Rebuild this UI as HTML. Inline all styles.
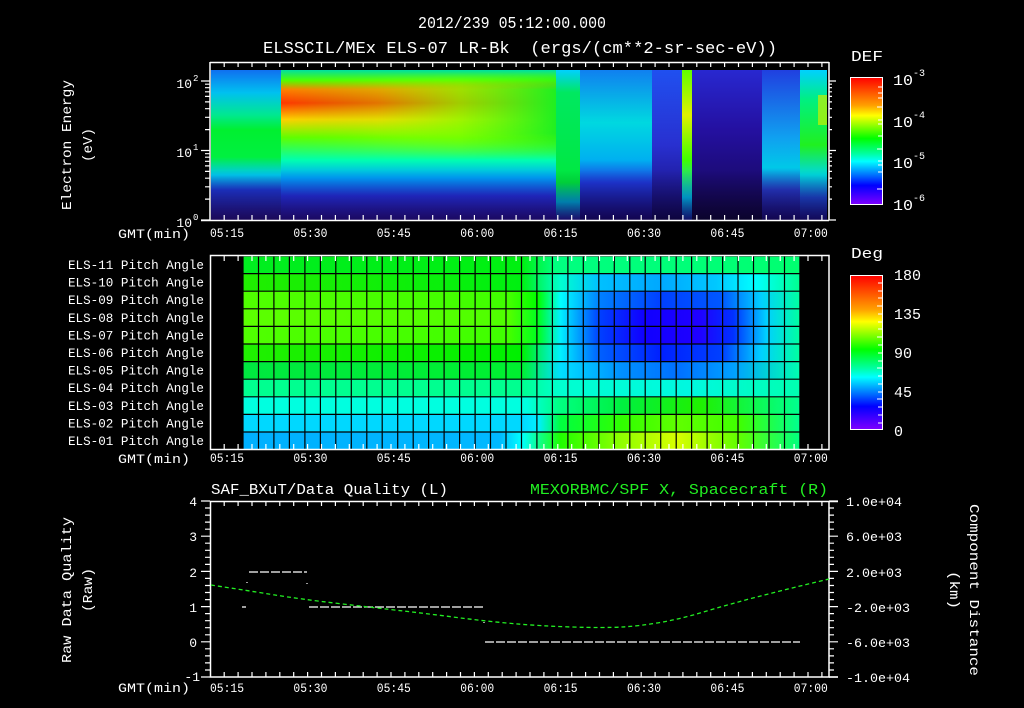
<!DOCTYPE html>
<html><head><meta charset="utf-8"><style>
html,body{margin:0;padding:0;background:#000;}
svg{display:block;}
text{font-family:"Liberation Mono","DejaVu Sans Mono",monospace;fill:#fff;}
</style></head><body>
<svg width="1024" height="708" viewBox="0 0 1024 708" xmlns="http://www.w3.org/2000/svg">
<defs>
<linearGradient id="gA" x1="0" y1="0" x2="0" y2="1">
 <stop offset="0" stop-color="#1070f0"/><stop offset="0.15" stop-color="#00c0f0"/><stop offset="0.3" stop-color="#00e890"/><stop offset="0.4" stop-color="#00f030"/>
 <stop offset="0.58" stop-color="#00f040"/><stop offset="0.7" stop-color="#00c8f0"/><stop offset="0.8" stop-color="#2038e0"/><stop offset="1" stop-color="#3010a0"/>
</linearGradient>
<linearGradient id="gB" x1="0" y1="0" x2="0" y2="1">
 <stop offset="0" stop-color="#00e0a0"/><stop offset="0.07" stop-color="#50ff00"/><stop offset="0.13" stop-color="#ff8000"/>
 <stop offset="0.22" stop-color="#ff3800"/><stop offset="0.33" stop-color="#ffd000"/><stop offset="0.45" stop-color="#60ff00"/>
 <stop offset="0.6" stop-color="#00ffb0"/><stop offset="0.72" stop-color="#00a0ff"/><stop offset="0.84" stop-color="#2830f0"/><stop offset="1" stop-color="#3010b0"/>
</linearGradient>
<linearGradient id="gBh" x1="0" y1="0" x2="1" y2="0">
 <stop offset="0" stop-color="#60ff00" stop-opacity="0"/><stop offset="0.35" stop-color="#a0ff00" stop-opacity="0.3"/><stop offset="0.65" stop-color="#80ff00" stop-opacity="0.75"/><stop offset="1" stop-color="#20f020" stop-opacity="1"/>
</linearGradient>
<linearGradient id="mv" x1="0" y1="0" x2="0" y2="1">
 <stop offset="0" stop-color="#fff" stop-opacity="0"/><stop offset="0.2" stop-color="#fff" stop-opacity="1"/><stop offset="0.7" stop-color="#fff" stop-opacity="1"/><stop offset="1" stop-color="#fff" stop-opacity="0"/>
</linearGradient>
<mask id="bandMask" maskUnits="userSpaceOnUse" x="281" y="70" width="275" height="100">
 <rect x="281" y="72" width="275" height="88" fill="url(#mv)"/>
</mask>
<linearGradient id="gC" x1="0" y1="0" x2="0" y2="1">
 <stop offset="0" stop-color="#00d0ff"/><stop offset="0.15" stop-color="#00e860"/><stop offset="0.75" stop-color="#00e840"/><stop offset="0.88" stop-color="#00b0f0"/><stop offset="1" stop-color="#3018c0"/>
</linearGradient>
<linearGradient id="gD" x1="0" y1="0" x2="0" y2="1">
 <stop offset="0" stop-color="#1080f0"/><stop offset="0.35" stop-color="#00d8e0"/><stop offset="0.6" stop-color="#00b0f0"/><stop offset="0.75" stop-color="#2038e0"/><stop offset="1" stop-color="#200890"/>
</linearGradient>
<linearGradient id="gE" x1="0" y1="0" x2="0" y2="1">
 <stop offset="0" stop-color="#2050f0"/><stop offset="0.5" stop-color="#2830d0"/><stop offset="1" stop-color="#180870"/>
</linearGradient>
<linearGradient id="gF" x1="0" y1="0" x2="0" y2="1">
 <stop offset="0" stop-color="#60ff00"/><stop offset="0.3" stop-color="#e0f000"/><stop offset="0.6" stop-color="#40ff00"/><stop offset="0.85" stop-color="#00c0ff"/><stop offset="1" stop-color="#2020c0"/>
</linearGradient>
<linearGradient id="gG" x1="0" y1="0" x2="0" y2="1">
 <stop offset="0" stop-color="#2828d0"/><stop offset="0.4" stop-color="#2410a0"/><stop offset="1" stop-color="#140650"/>
</linearGradient>
<linearGradient id="gH" x1="0" y1="0" x2="0" y2="1">
 <stop offset="0" stop-color="#2040e0"/><stop offset="0.45" stop-color="#10a0f0"/><stop offset="0.65" stop-color="#00c8e8"/><stop offset="0.8" stop-color="#2838d0"/><stop offset="1" stop-color="#200a90"/>
</linearGradient>
<linearGradient id="gI" x1="0" y1="0" x2="0" y2="1">
 <stop offset="0" stop-color="#00d0ff"/><stop offset="0.2" stop-color="#00f080"/><stop offset="0.5" stop-color="#20f020"/><stop offset="0.7" stop-color="#00d8e0"/><stop offset="0.85" stop-color="#2048e0"/><stop offset="1" stop-color="#2010a0"/>
</linearGradient>
<linearGradient id="dark" x1="0" y1="0" x2="0" y2="1">
 <stop offset="0" stop-color="#000" stop-opacity="0"/><stop offset="1" stop-color="#000" stop-opacity="0.45"/>
</linearGradient>
<linearGradient id="gDef" x1="0" y1="0" x2="0" y2="1">
 <stop offset="0" stop-color="#ff0000"/><stop offset="0.22" stop-color="#ffa000"/><stop offset="0.3" stop-color="#ffff00"/><stop offset="0.48" stop-color="#00ff00"/>
 <stop offset="0.6" stop-color="#00ffa0"/><stop offset="0.66" stop-color="#00ffff"/><stop offset="0.78" stop-color="#0060ff"/><stop offset="0.85" stop-color="#0000ff"/><stop offset="1" stop-color="#7f00ff"/>
</linearGradient>
<linearGradient id="r1" x1="243" x2="800" gradientUnits="userSpaceOnUse"><stop offset="0" stop-color="#00ee20"/><stop offset="0.5" stop-color="#00f010"/><stop offset="0.56" stop-color="#00ff80"/><stop offset="1" stop-color="#00ff70"/></linearGradient>
<linearGradient id="r2" x1="243" x2="800" gradientUnits="userSpaceOnUse"><stop offset="0" stop-color="#20ee00"/><stop offset="0.5" stop-color="#00f010"/><stop offset="0.57" stop-color="#00ffd0"/><stop offset="0.64" stop-color="#00c0ff"/><stop offset="0.75" stop-color="#00a8ff"/><stop offset="0.85" stop-color="#00c8ff"/><stop offset="0.92" stop-color="#00ffff"/><stop offset="1" stop-color="#00ff90"/></linearGradient>
<linearGradient id="r3" x1="243" x2="800" gradientUnits="userSpaceOnUse"><stop offset="0" stop-color="#50ff00"/><stop offset="0.48" stop-color="#40ff00"/><stop offset="0.53" stop-color="#00ff00"/><stop offset="0.57" stop-color="#00ffff"/><stop offset="0.64" stop-color="#0080ff"/><stop offset="0.75" stop-color="#0040ff"/><stop offset="0.86" stop-color="#0058ff"/><stop offset="0.93" stop-color="#00d0ff"/><stop offset="1" stop-color="#00ffa0"/></linearGradient>
<linearGradient id="r4" x1="243" x2="800" gradientUnits="userSpaceOnUse"><stop offset="0" stop-color="#5cff00"/><stop offset="0.48" stop-color="#50ff00"/><stop offset="0.53" stop-color="#00ff20"/><stop offset="0.57" stop-color="#00f0ff"/><stop offset="0.64" stop-color="#0040ff"/><stop offset="0.72" stop-color="#1000ff"/><stop offset="0.82" stop-color="#2000ff"/><stop offset="0.88" stop-color="#0030ff"/><stop offset="0.94" stop-color="#00d0ff"/><stop offset="1" stop-color="#00ffa0"/></linearGradient>
<linearGradient id="r5" x1="243" x2="800" gradientUnits="userSpaceOnUse"><stop offset="0" stop-color="#50ff00"/><stop offset="0.48" stop-color="#40ff00"/><stop offset="0.53" stop-color="#00ff20"/><stop offset="0.57" stop-color="#00f0ff"/><stop offset="0.64" stop-color="#0040ff"/><stop offset="0.72" stop-color="#1000ff"/><stop offset="0.82" stop-color="#2000ff"/><stop offset="0.88" stop-color="#0030ff"/><stop offset="0.94" stop-color="#00d0ff"/><stop offset="1" stop-color="#00ffa0"/></linearGradient>
<linearGradient id="r6" x1="243" x2="800" gradientUnits="userSpaceOnUse"><stop offset="0" stop-color="#20f000"/><stop offset="0.5" stop-color="#00f000"/><stop offset="0.57" stop-color="#00f0ff"/><stop offset="0.64" stop-color="#0060ff"/><stop offset="0.75" stop-color="#0020ff"/><stop offset="0.86" stop-color="#0040ff"/><stop offset="0.93" stop-color="#00d0ff"/><stop offset="1" stop-color="#00ffa0"/></linearGradient>
<linearGradient id="r7" x1="243" x2="800" gradientUnits="userSpaceOnUse"><stop offset="0" stop-color="#00e840"/><stop offset="0.5" stop-color="#00f030"/><stop offset="0.57" stop-color="#00e0ff"/><stop offset="0.68" stop-color="#0090ff"/><stop offset="0.78" stop-color="#0070ff"/><stop offset="0.88" stop-color="#00a0ff"/><stop offset="1" stop-color="#00ffb0"/></linearGradient>
<linearGradient id="r8" x1="243" x2="800" gradientUnits="userSpaceOnUse"><stop offset="0" stop-color="#00ff90"/><stop offset="0.5" stop-color="#00ff90"/><stop offset="0.57" stop-color="#00ffd0"/><stop offset="0.8" stop-color="#00f8e0"/><stop offset="1" stop-color="#00ffb0"/></linearGradient>
<linearGradient id="r9" x1="243" x2="800" gradientUnits="userSpaceOnUse"><stop offset="0" stop-color="#00ffe0"/><stop offset="0.51" stop-color="#00ffe0"/><stop offset="0.57" stop-color="#00ff80"/><stop offset="0.68" stop-color="#00f040"/><stop offset="0.82" stop-color="#20f000"/><stop offset="1" stop-color="#00ff90"/></linearGradient>
<linearGradient id="r10" x1="243" x2="800" gradientUnits="userSpaceOnUse"><stop offset="0" stop-color="#00d8ff"/><stop offset="0.5" stop-color="#00d8ff"/><stop offset="0.53" stop-color="#00f0ff"/><stop offset="0.57" stop-color="#00ff40"/><stop offset="0.68" stop-color="#30ff00"/><stop offset="0.78" stop-color="#60ff00"/><stop offset="0.89" stop-color="#40ff00"/><stop offset="1" stop-color="#00ff90"/></linearGradient>
<linearGradient id="r11" x1="243" x2="800" gradientUnits="userSpaceOnUse"><stop offset="0" stop-color="#00b0ff"/><stop offset="0.46" stop-color="#00b8ff"/><stop offset="0.5" stop-color="#00ffff"/><stop offset="0.57" stop-color="#20ff00"/><stop offset="0.68" stop-color="#90ff00"/><stop offset="0.78" stop-color="#d8ff00"/><stop offset="0.89" stop-color="#60ff00"/><stop offset="1" stop-color="#00ff80"/></linearGradient>
</defs>

<text x="512" y="28" text-anchor="middle" font-size="17" textLength="188" lengthAdjust="spacingAndGlyphs">2012/239 05:12:00.000</text>
<text x="520" y="53" text-anchor="middle" font-size="17" textLength="514" lengthAdjust="spacingAndGlyphs" xml:space="preserve">ELSSCIL/MEx ELS-07 LR-Bk  (ergs/(cm**2-sr-sec-eV))</text>

<g>
<rect x="211" y="70" width="70" height="150" fill="url(#gA)"/>
<rect x="281" y="70" width="275" height="150" fill="url(#gB)"/>
<rect x="281" y="72" width="275" height="88" fill="url(#gBh)" mask="url(#bandMask)"/>
<rect x="556" y="70" width="24" height="150" fill="url(#gC)"/>
<rect x="580" y="70" width="72" height="150" fill="url(#gD)"/>
<rect x="652" y="70" width="30" height="150" fill="url(#gE)"/>
<rect x="682" y="70" width="10" height="150" fill="url(#gF)"/>
<rect x="692" y="70" width="70" height="150" fill="url(#gG)"/>
<rect x="762" y="70" width="38" height="150" fill="url(#gH)"/>
<rect x="800" y="70" width="27" height="150" fill="url(#gI)"/>
<rect x="818" y="95" width="9" height="30" fill="#c8f000" opacity="0.7"/>
<rect x="211" y="170" width="616" height="50" fill="url(#dark)"/>
</g>
<path d="M210 62V220.5M201 220.5H829M829 62V220.5M210 62.5H829" stroke="#fff" stroke-width="1.5" fill="none"/>
<g id="topticks" stroke="#fff" stroke-width="1.2"></g>
<text x="192" y="88" text-anchor="end" font-size="13">10</text><text x="193" y="81" font-size="9">2</text>
<text x="192" y="157" text-anchor="end" font-size="13">10</text><text x="193" y="150" font-size="9">1</text>
<text x="192" y="227" text-anchor="end" font-size="13">10</text><text x="193" y="220" font-size="9">0</text>
<text transform="translate(71,145) rotate(-90)" text-anchor="middle" font-size="14" textLength="130" lengthAdjust="spacingAndGlyphs">Electron Energy</text>
<text transform="translate(92,145) rotate(-90)" text-anchor="middle" font-size="14" textLength="34" lengthAdjust="spacingAndGlyphs">(eV)</text>

<text x="851" y="61" font-size="15" textLength="32" lengthAdjust="spacingAndGlyphs">DEF</text>
<rect x="850.5" y="77.5" width="32" height="127" fill="url(#gDef)" stroke="#fff" stroke-width="1"/>
<g font-size="15">
<text x="893" y="85" textLength="20" lengthAdjust="spacingAndGlyphs">10</text><text x="913" y="76" font-size="10">-3</text>
<text x="893" y="127" textLength="20" lengthAdjust="spacingAndGlyphs">10</text><text x="913" y="118" font-size="10">-4</text>
<text x="893" y="168" textLength="20" lengthAdjust="spacingAndGlyphs">10</text><text x="913" y="159" font-size="10">-5</text>
<text x="893" y="210" textLength="20" lengthAdjust="spacingAndGlyphs">10</text><text x="913" y="201" font-size="10">-6</text>
</g>
<path d="M878 87H883M878 93H883M878 98H883M877 107H883M878 120H883M878 124H883M878 136H883M877 149H883M878 161H883M878 165H883M878 172H883M877 189H883" stroke="#fff" stroke-width="1"/>

<g>
<rect x="243" y="256" width="557" height="17.6" fill="url(#r1)"/>
<rect x="243" y="273.6" width="557" height="17.6" fill="url(#r2)"/>
<rect x="243" y="291.2" width="557" height="17.6" fill="url(#r3)"/>
<rect x="243" y="308.8" width="557" height="17.6" fill="url(#r4)"/>
<rect x="243" y="326.4" width="557" height="17.6" fill="url(#r5)"/>
<rect x="243" y="344" width="557" height="17.6" fill="url(#r6)"/>
<rect x="243" y="361.6" width="557" height="17.6" fill="url(#r7)"/>
<rect x="243" y="379.2" width="557" height="17.6" fill="url(#r8)"/>
<rect x="243" y="396.8" width="557" height="17.6" fill="url(#r9)"/>
<rect x="243" y="414.4" width="557" height="17.6" fill="url(#r10)"/>
<rect x="243" y="432" width="557" height="17" fill="url(#r11)"/>
</g>
<g id="grid" stroke="#000" stroke-width="1.2"></g>
<rect x="210.5" y="255.5" width="618.5" height="194" fill="none" stroke="#fff" stroke-width="1.5"/>
<g id="midticks" stroke="#fff" stroke-width="1.2"></g>
<g font-size="12.5" text-anchor="end" id="rowlabels"></g>

<text x="851" y="258" font-size="15" textLength="32" lengthAdjust="spacingAndGlyphs">Deg</text>
<rect x="850.5" y="275.5" width="32" height="154" fill="url(#gDef)" stroke="#fff" stroke-width="1"/>
<g font-size="15">
<text x="894" y="280">180</text><text x="894" y="319">135</text><text x="894" y="358">90</text><text x="894" y="397">45</text><text x="894" y="436">0</text>
</g>
<path d="M878 283H883M878 291H883M878 298H883M877 306H883M878 314H883M878 322H883M878 329H883M877 337H883M878 345H883M878 353H883M878 361H883M877 368H883M878 376H883M878 384H883M878 392H883M877 399H883M878 407H883M878 415H883M878 423H883" stroke="#fff" stroke-width="1"/>

<text x="211" y="494" font-size="15" textLength="237" lengthAdjust="spacingAndGlyphs">SAF_BXuT/Data Quality (L)</text>
<text x="530" y="494" font-size="15" textLength="298" lengthAdjust="spacingAndGlyphs" style="fill:#22ee22">MEXORBMC/SPF X, Spacecraft (R)</text>
<rect x="210.5" y="501.5" width="618.5" height="175.5" fill="none" stroke="#fff" stroke-width="1.5"/>
<path d="M829 501.5H838M829 677H838" stroke="#fff" stroke-width="1.5"/>
<g id="botticks" stroke="#fff" stroke-width="1.2"></g>
<g font-size="13" text-anchor="end">
<text x="197" y="506">4</text><text x="197" y="541">3</text><text x="197" y="577">2</text><text x="197" y="612">1</text><text x="197" y="647">0</text><text x="200" y="681">-1</text>
</g>
<g font-size="12.5">
<text x="846" y="506" textLength="56" lengthAdjust="spacingAndGlyphs">1.0e+04</text>
<text x="846" y="541" textLength="56" lengthAdjust="spacingAndGlyphs">6.0e+03</text>
<text x="846" y="577" textLength="56" lengthAdjust="spacingAndGlyphs">2.0e+03</text>
<text x="846" y="612" textLength="64" lengthAdjust="spacingAndGlyphs">-2.0e+03</text>
<text x="846" y="647" textLength="64" lengthAdjust="spacingAndGlyphs">-6.0e+03</text>
<text x="846" y="682" textLength="64" lengthAdjust="spacingAndGlyphs">-1.0e+04</text>
</g>
<text transform="translate(71,590) rotate(-90)" text-anchor="middle" font-size="14" textLength="146" lengthAdjust="spacingAndGlyphs">Raw Data Quality</text>
<text transform="translate(92,590) rotate(-90)" text-anchor="middle" font-size="14" textLength="44" lengthAdjust="spacingAndGlyphs">(Raw)</text>
<text transform="translate(970,590) rotate(90)" text-anchor="middle" font-size="14" textLength="172" lengthAdjust="spacingAndGlyphs">Component Distance</text>
<text transform="translate(950,590) rotate(90)" text-anchor="middle" font-size="14" textLength="38" lengthAdjust="spacingAndGlyphs">(km)</text>

<g stroke="#fff" stroke-width="1.2" stroke-dasharray="9 2">
<path d="M249 572H307"/><path d="M309 607H484"/><path d="M485 642H800"/>
</g>
<path d="M242 607H246M247 582V583M307 583V584M484 622V623" stroke="#fff" stroke-width="1.2"/>
<path id="curve" d="" stroke="#22ee22" stroke-width="1.3" fill="none" stroke-dasharray="4 3"/>

<g id="gmt" font-size="13"></g>
</svg>
<script>
(function(){
var NS="http://www.w3.org/2000/svg";
function el(p,t,a,txt){var e=document.createElementNS(NS,t);for(var k in a)e.setAttribute(k,a[k]);if(txt!==undefined)e.textContent=txt;p.appendChild(e);return e;}
var x0=227,ppm=83.4/15;
function tx(m){return x0+m*ppm;}
function ticks(g,top,bot){
 var d="";
 for(var m=-3;m<=108;m+=2.5){
  var x=tx(m); if(x<211||x>828)continue;
  var major=(Math.abs(m%15)<0.01);
  var L=major?9:5;
  d+="M"+x.toFixed(1)+" "+top+"v"+L+"M"+x.toFixed(1)+" "+bot+"v-"+L;
 }
 el(g,"path",{d:d});
}
ticks(document.getElementById("topticks"),62,220);
ticks(document.getElementById("midticks"),256,449);
ticks(document.getElementById("botticks"),501,677);
var tt=document.getElementById("topticks"),d="";
function ly(v){return 220-Math.log10(v)*69.5;}
for(var dec=0;dec<3;dec++)for(var k=1;k<10;k++){var v=k*Math.pow(10,dec);if(v>150)continue;var y=ly(v);var L=(k==1)?9:5;d+="M210 "+y.toFixed(1)+"h-"+L+"M829 "+y.toFixed(1)+"h"+(L-2);}
el(tt,"path",{d:d});
var bt=document.getElementById("botticks");d="";
for(var i=0;i<=25;i++){var y=501+i*7.04;var L=(i%5==0)?9:5;d+="M210 "+y.toFixed(1)+"h-"+L+"M829 "+y.toFixed(1)+"h"+L;}
el(bt,"path",{d:d});
var g=document.getElementById("grid");d="";
for(var x=243;x<=801;x+=15.47)d+="M"+x.toFixed(1)+" 256V449";
for(var r=0;r<=11;r++){var y=256+r*17.6;d+="M243 "+y.toFixed(1)+"H800";}
el(g,"path",{d:d});
var rl=document.getElementById("rowlabels");
for(var r=0;r<11;r++){var n=11-r;var s="ELS-"+(n<10?"0":"")+n+" Pitch Angle";el(rl,"text",{x:204,y:(269+r*17.6).toFixed(1),textLength:136,lengthAdjust:"spacingAndGlyphs"},s);}
var gm=document.getElementById("gmt");
var labs=["05:15","05:30","05:45","06:00","06:15","06:30","06:45","07:00"];
[[237,238],[462,463],[692,692]].forEach(function(yy){
 el(gm,"text",{x:190,y:yy[1],"text-anchor":"end",textLength:72,lengthAdjust:"spacingAndGlyphs"},"GMT(min)");
 labs.forEach(function(l,i){el(gm,"text",{x:tx(i*15).toFixed(1),y:yy[0],"text-anchor":"middle",textLength:34,lengthAdjust:"spacingAndGlyphs"},l);});
});
var pts=[[211,585],[250,591],[300,599],[377,608],[430,614],[484,621],[540,626],[604,628],[640,626],[680,619],[720,607],[760,596],[800,586],[829,579]];
var p="M"+pts[0].join(" ");
for(var i=1;i<pts.length;i++){var a=pts[i-1],b=pts[i];var mx=(a[0]+b[0])/2;p+=" Q"+a[0]+" "+a[1]+" "+mx+" "+((a[1]+b[1])/2);}
p+=" L829 579";
document.getElementById("curve").setAttribute("d",p);
})();
</script>
</body></html>
